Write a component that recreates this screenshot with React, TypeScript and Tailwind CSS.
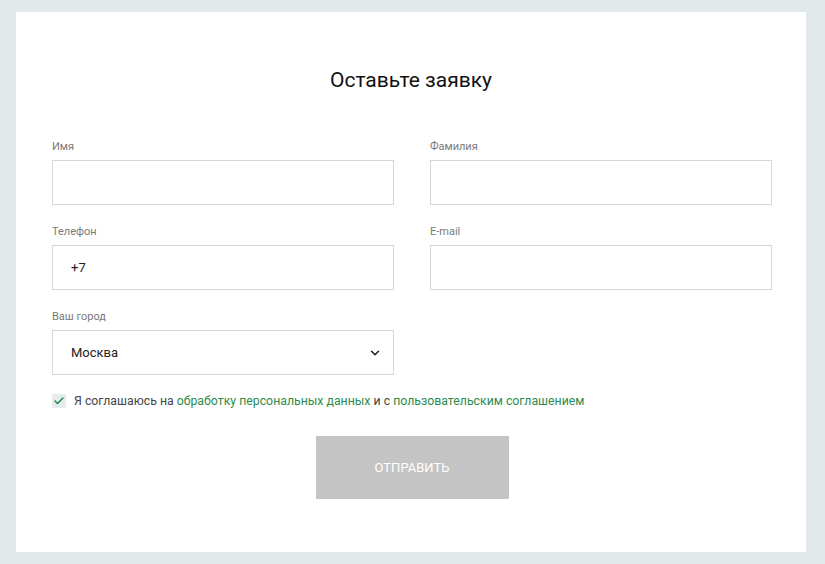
import React from "react";
import { ChevronDown, Check } from "lucide-react";

function Field(props: { label: string; children: React.ReactNode }) {
  return (
    <div className="flex flex-col">
      <span className="text-[11px] leading-[14px] text-[#7a7a7a] mt-[1px] mb-[6px]">{props.label}</span>
      {props.children}
    </div>
  );
}

function TextBox(props: { value?: string }) {
  return (
    <div className="h-[45px] border border-[#d6d6d6] bg-white flex items-center px-[18px] text-[13px] text-[#222]">
      {props.value}
    </div>
  );
}

export default function App() {
  return (
    <div
      className="min-h-[564px] w-[825px] bg-[#e2e9ea] pt-[12px] pl-[16px]"
      style={{ fontFamily: "Roboto, 'Liberation Sans', sans-serif" }}
    >
      <div className="w-[790px] h-[540px] bg-white pt-[55px] flex flex-col items-center">
        <h1 className="text-[21px] leading-[26px] text-[#111] font-normal">Оставьте заявку</h1>

        <div className="w-[720px] mt-[46px] ml-[2px] grid grid-cols-2 gap-x-[36px] gap-y-[19px]">
          <Field label="Имя">
            <TextBox />
          </Field>
          <Field label="Фамилия">
            <TextBox />
          </Field>
          <Field label="Телефон">
            <TextBox value="+7" />
          </Field>
          <Field label="E-mail">
            <TextBox />
          </Field>
          <Field label="Ваш город">
            <div className="h-[45px] border border-[#d6d6d6] bg-white flex items-center justify-between pl-[18px] pr-[11px] text-[13px] text-[#222]">
              <span>Москва</span>
              <ChevronDown size={14} strokeWidth={2.6} className="text-[#222]" />
            </div>
          </Field>
        </div>

        <div className="w-[720px] ml-[2px] mt-[17px] flex items-center gap-[8px] text-[12.3px] text-[#444]">
          <span className="w-[14px] h-[14px] bg-[#e6ecec] flex items-center justify-center">
            <Check size={12} strokeWidth={3} className="text-[#1f8a4c]" />
          </span>
          <span>
            Я соглашаюсь на <span className="text-[#2e8b4e]">обработку персональных данных</span> и с{" "}
            <span className="text-[#2e8b4e]">пользовательским соглашением</span>
          </span>
        </div>

        <button
          type="button"
          className="mt-[26px] ml-[2px] w-[193px] h-[63px] bg-[#c4c4c4] text-white text-[13px] uppercase"
        >
          Отправить
        </button>
      </div>
    </div>
  );
}
